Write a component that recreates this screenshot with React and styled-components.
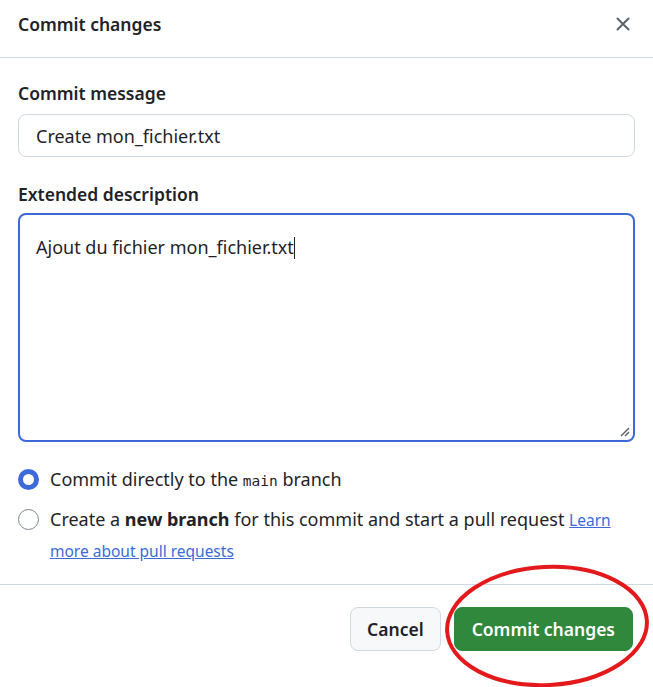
import React from "react";
import styled, { createGlobalStyle } from "styled-components";

const GlobalStyle = createGlobalStyle`
    html, body {
        margin: 0;
        padding: 0;
        background: #ffffff;
    }
    body {
        font-family: "Noto Sans", "Open Sans", sans-serif;
        color: #1f2328;
    }
`

const Dialog = styled.div`
    position: relative;
    width: 653px;
    height: 687px;
    background: #ffffff;
    overflow: hidden;
    display: flex;
    flex-direction: column;
`
const Header = styled.div`
    height: 57px;
    border-bottom: 1px solid #d1d9e0;
    display: flex;
    align-items: center;
    justify-content: space-between;
    padding: 0 18px;
`
const Title = styled.h1`
    margin: 0;
    font-size: 17.5px;
    font-weight: 600;
    margin-top: -10px;
`
const CloseButton = styled.button`
    border: none;
    background: none;
    padding: 0;
    width: 24px;
    height: 24px;
    margin-top: -10px;
    display: flex;
    align-items: center;
    justify-content: center;
    cursor: pointer;
`
const Body = styled.div`
    padding: 23px 18px 18px 18px;
    border-bottom: 1px solid #d1d9e0;
`
const Label = styled.label`
    display: block;
    font-size: 17.5px;
    font-weight: 600;
    line-height: 25px;
    margin-bottom: ${(p) => p.gap || 8}px;
`
const TextInput = styled.div`
    box-sizing: border-box;
    height: 43px;
    border: 1px solid #d1d9e0;
    border-radius: 8px;
    padding: 0 17px;
    display: flex;
    align-items: center;
    font-size: 18px;
    margin-bottom: 25px;
`
const TextArea = styled.div`
    position: relative;
    box-sizing: border-box;
    height: 229px;
    border: 2px solid #3c6bd9;
    border-radius: 8px;
    padding: 20px 16px;
    font-size: 18px;
    line-height: 25px;
    margin-bottom: 22px;
`
const Caret = styled.span`
    display: inline-block;
    width: 1px;
    height: 22px;
    background: #1f2328;
    vertical-align: -5px;
`
const Grip = styled.svg`
    position: absolute;
    right: 2px;
    bottom: 2px;
`
const Options = styled.div`
    display: flex;
    flex-direction: column;
    gap: 8px;
`
const Option = styled.div`
    display: flex;
    align-items: flex-start;
    gap: 11px;
    font-size: 18px;
    line-height: 30px;
`
const Radio = styled.span`
    flex: none;
    box-sizing: border-box;
    width: 21px;
    height: 21px;
    margin-top: 5px;
    border-radius: 50%;
    border: ${(p) => (p.checked ? "5px solid #3c6bd9" : "1px solid #7d8590")};
    background: #ffffff;
`
const Code = styled.code`
    font-family: "DejaVu Sans Mono", "Liberation Mono", monospace;
    font-size: 14.5px;
`
const Link = styled.a`
    color: #3c6bd9;
    text-decoration: underline;
    font-size: 15.5px;
`
const Footer = styled.div`
    display: flex;
    justify-content: flex-end;
    gap: 13px;
    padding: 22px 20px;
`
const Button = styled.button`
    box-sizing: border-box;
    height: 44px;
    padding: 0 ${(p) => (p.primary ? 17 : 16)}px;
    border-radius: 8px;
    font-family: inherit;
    font-size: 17.5px;
    font-weight: 600;
    cursor: pointer;
    border: 1px solid ${(p) => (p.primary ? "#2e8a3e" : "#d1d9e0")};
    background: ${(p) => (p.primary ? "#2f883b" : "#f6f8fa")};
    color: ${(p) => (p.primary ? "#ffffff" : "#1f2328")};
`
const Annotation = styled.svg`
    position: absolute;
    left: 440px;
    top: 563px;
    pointer-events: none;
`

const App = () => {
    return (
        <>
            <GlobalStyle />
            <Dialog>
                <Header>
                    <Title>Commit changes</Title>
                    <CloseButton aria-label="Close">
                        <svg width="14" height="14" viewBox="0 0 14 14">
                            <path d="M1.5 1.5 L12.5 12.5 M12.5 1.5 L1.5 12.5" stroke="#59636e" strokeWidth="2" strokeLinecap="round" />
                        </svg>
                    </CloseButton>
                </Header>
                <Body>
                    <Label>Commit message</Label>
                    <TextInput>Create mon_fichier.txt</TextInput>
                    <Label gap={6}>Extended description</Label>
                    <TextArea>
                        Ajout du fichier mon_fichier.txt<Caret />
                        <Grip width="12" height="12" viewBox="0 0 12 12">
                            <path d="M2 10 L10 2 M6 10 L10 6" stroke="#57606a" strokeWidth="1.4" />
                        </Grip>
                    </TextArea>
                    <Options>
                        <Option>
                            <Radio checked />
                            <span>Commit directly to the <Code>main</Code> branch</span>
                        </Option>
                        <Option>
                            <Radio />
                            <span>
                                Create a <b>new branch</b> for this commit and start a pull request{" "}
                                <Link href="#">Learn more about pull requests</Link>
                            </span>
                        </Option>
                    </Options>
                </Body>
                <Footer>
                    <Button>Cancel</Button>
                    <Button primary>Commit changes</Button>
                </Footer>
                <Annotation width="213" height="125" viewBox="0 0 213 125">
                    <ellipse cx="107" cy="63" rx="100" ry="59" fill="none" stroke="#e3191c" strokeWidth="4" transform="rotate(-3 107 63)" />
                </Annotation>
            </Dialog>
        </>
    )
}

export default App;
